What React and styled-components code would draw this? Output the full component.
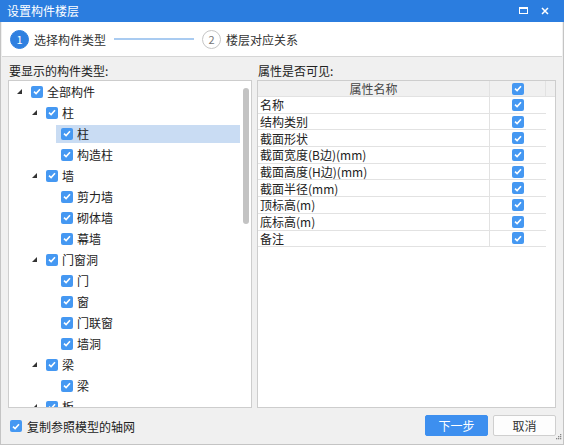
import React from 'react';
import styled, { createGlobalStyle } from 'styled-components';

const GlobalStyle = createGlobalStyle`
  html, body {
    margin: 0;
    padding: 0;
    background: #f0f0f0;
  }
  * {
    box-sizing: border-box;
  }
`;

const Window = styled.div`
  width: 564px;
  height: 445px;
  display: flex;
  flex-direction: column;
  background: #f0f0f0;
  border: 1px solid #c4c4c4;
  border-top: none;
  font-family: "Noto Sans CJK SC", "Noto Sans", sans-serif;
  font-size: 12px;
  color: #222;
  position: relative;
`;

const TitleBar = styled.div`
  height: 22px;
  margin: 0 -1px;
  background: #2b7ddf;
  color: #fff;
  display: flex;
  align-items: center;
  padding: 0 8px 1px 7px;
`;

const Title = styled.div`
  flex: 1;
  font-size: 12px;
`;

const TitleButton = styled.div`
  width: 22px;
  height: 20px;
  display: flex;
  align-items: center;
  justify-content: center;
`;

const StepBar = styled.div`
  height: 35px;
  margin: 0 1px;
  background: #fff;
  border-bottom: 1px solid #d6d6d6;
  display: flex;
  align-items: center;
  padding-left: 8px;
`;

const StepCircle = styled.div`
  width: 19px;
  height: 19px;
  border-radius: 50%;
  display: flex;
  align-items: center;
  justify-content: center;
  font-size: 11px;
  background: ${(p) => (p.active ? '#2f80e0' : '#fff')};
  border: 1px solid ${(p) => (p.active ? '#2f80e0' : '#c6c6c6')};
  color: ${(p) => (p.active ? '#fff' : '#777')};
`;

const StepText = styled.div`
  margin-left: 5px;
  color: #333;
`;

const StepLine = styled.div`
  width: 80px;
  height: 2px;
  background: #a9cbf1;
  margin: 0 8px 0 8px;
`;

const Content = styled.div`
  display: flex;
  gap: 5px;
  padding: 0 0 0 7px;
`;

const Column = styled.div`
  width: ${(p) => p.width}px;
  display: flex;
  flex-direction: column;
`;

const Label = styled.div`
  height: 23px;
  line-height: 28px;
  padding-left: 1px;
  color: #222;
`;

const Box = styled.div`
  height: 328px;
  background: #fff;
  border: 1px solid #cdcdcd;
  display: flex;
  overflow: hidden;
`;

const TreeList = styled.div`
  flex: 1;
`;

const Row = styled.div`
  height: 21px;
  display: flex;
  align-items: center;
  padding-left: ${(p) => 8 + p.level * 15}px;
`;

const Toggle = styled.div`
  width: 9px;
  height: 21px;
  display: flex;
  align-items: center;
`;

const Node = styled.div`
  flex: 1;
  height: 18px;
  display: flex;
  align-items: center;
  padding-left: 5px;
  background: ${(p) => (p.selected ? '#c9dcf3' : 'transparent')};
`;

const NodeText = styled.span`
  margin-left: 4px;
`;

const ScrollTrack = styled.div`
  width: 11px;
  padding-top: 7px;
  display: flex;
  justify-content: center;
`;

const ScrollThumb = styled.div`
  width: 6px;
  height: 136px;
  border-radius: 3px;
  background: #c3c3c3;
`;

const CheckBox = styled.span`
  width: 12px;
  height: 12px;
  border-radius: 2px;
  background: #4598f2;
  display: inline-flex;
  align-items: center;
  justify-content: center;
  flex-shrink: 0;
`;

const Table = styled.div`
  flex: 1;
  display: flex;
  flex-direction: column;
`;

const HeaderRow = styled.div`
  height: 16px;
  display: flex;
  background: #f0f0f0;
  border-bottom: 1px solid #e2e2e2;
`;

const DataRow = styled.div`
  height: 16.7px;
  width: 288px;
  display: flex;
  border-bottom: 1px solid #e2e2e2;
`;

const NameCell = styled.div`
  width: 232px;
  display: flex;
  align-items: center;
  justify-content: ${(p) => (p.center ? 'center' : 'flex-start')};
  padding-left: ${(p) => (p.center ? 0 : 2)}px;
  border-right: 1px solid #e2e2e2;
  color: ${(p) => (p.center ? '#444' : '#222')};
`;

const CheckCell = styled.div`
  width: 56px;
  display: flex;
  align-items: center;
  justify-content: center;
  border-right: ${(p) => (p.header ? '1px solid #e2e2e2' : 'none')};
`;

const Footer = styled.div`
  flex: 1;
  display: flex;
  align-items: center;
  padding: 0 7px 2px 9px;
`;

const FooterCheck = styled.label`
  flex: 1;
  display: flex;
  align-items: center;
  gap: 5px;
  margin-top: 2px;
`;

const Button = styled.button`
  width: 63px;
  height: 21px;
  margin-left: 5px;
  font-family: inherit;
  font-size: 12px;
  border-radius: 2px;
  border: 1px solid ${(p) => (p.primary ? '#3d8fef' : '#cfcfcf')};
  background: ${(p) => (p.primary ? '#3d8fef' : '#fdfdfd')};
  color: ${(p) => (p.primary ? '#fff' : '#333')};
  padding: 0;
`;

const Grip = styled.div`
  position: absolute;
  right: 1px;
  bottom: 1px;
`;

const Check = () => (
  <CheckBox>
    <svg width="8" height="7" viewBox="0 0 8 7">
      <path d="M1 3.6 L3.1 5.6 L7 1.3" fill="none" stroke="#fff" strokeWidth="1.6" />
    </svg>
  </CheckBox>
);

const Arrow = () => (
  <svg width="5" height="5" viewBox="0 0 5 5">
    <polygon points="5,0 5,5 0,5" fill="#333" />
  </svg>
);

const tree = [
  { level: 0, text: '全部构件', open: true },
  { level: 1, text: '柱', open: true },
  { level: 2, text: '柱', selected: true },
  { level: 2, text: '构造柱' },
  { level: 1, text: '墙', open: true },
  { level: 2, text: '剪力墙' },
  { level: 2, text: '砌体墙' },
  { level: 2, text: '幕墙' },
  { level: 1, text: '门窗洞', open: true },
  { level: 2, text: '门' },
  { level: 2, text: '窗' },
  { level: 2, text: '门联窗' },
  { level: 2, text: '墙洞' },
  { level: 1, text: '梁', open: true },
  { level: 2, text: '梁' },
  { level: 1, text: '板', open: true },
];

const props = [
  '名称',
  '结构类别',
  '截面形状',
  '截面宽度(B边)(mm)',
  '截面高度(H边)(mm)',
  '截面半径(mm)',
  '顶标高(m)',
  '底标高(m)',
  '备注',
];

export default function App() {
  return (
    <>
      <GlobalStyle />
      <Window>
        <TitleBar>
          <Title>设置构件楼层</Title>
          <TitleButton>
            <svg width="9" height="7" viewBox="0 0 9 7">
              <rect x="0.5" y="0.5" width="8" height="6" fill="none" stroke="#fff" />
              <rect x="0.5" y="0.5" width="8" height="1.5" fill="#fff" />
            </svg>
          </TitleButton>
          <TitleButton>
            <svg width="8" height="8" viewBox="0 0 8 8">
              <path d="M1 1 L7 7 M7 1 L1 7" stroke="#fff" strokeWidth="1.5" />
            </svg>
          </TitleButton>
        </TitleBar>
        <StepBar>
          <StepCircle active>1</StepCircle>
          <StepText>选择构件类型</StepText>
          <StepLine />
          <StepCircle>2</StepCircle>
          <StepText>楼层对应关系</StepText>
        </StepBar>
        <Content>
          <Column width={244}>
            <Label>要显示的构件类型:</Label>
            <Box>
              <TreeList>
                {tree.map((n, i) => (
                  <Row key={i} level={n.level}>
                    <Toggle>{n.open && <Arrow />}</Toggle>
                    <Node selected={n.selected}>
                      <Check />
                      <NodeText>{n.text}</NodeText>
                    </Node>
                  </Row>
                ))}
              </TreeList>
              <ScrollTrack>
                <ScrollThumb />
              </ScrollTrack>
            </Box>
          </Column>
          <Column width={299}>
            <Label>属性是否可见:</Label>
            <Box>
              <Table>
                <HeaderRow>
                  <NameCell center>属性名称</NameCell>
                  <CheckCell header>
                    <Check />
                  </CheckCell>
                </HeaderRow>
                {props.map((p) => (
                  <DataRow key={p}>
                    <NameCell>{p}</NameCell>
                    <CheckCell>
                      <Check />
                    </CheckCell>
                  </DataRow>
                ))}
              </Table>
            </Box>
          </Column>
        </Content>
        <Footer>
          <FooterCheck>
            <Check />
            <span>复制参照模型的轴网</span>
          </FooterCheck>
          <Button primary>下一步</Button>
          <Button>取消</Button>
        </Footer>
        <Grip>
          <svg width="6" height="6" viewBox="0 0 6 6">
            <rect x="4" y="0" width="1.3" height="1.3" fill="#888" />
            <rect x="2" y="2" width="1.3" height="1.3" fill="#888" />
            <rect x="4" y="2" width="1.3" height="1.3" fill="#888" />
            <rect x="0" y="4" width="1.3" height="1.3" fill="#888" />
            <rect x="2" y="4" width="1.3" height="1.3" fill="#888" />
            <rect x="4" y="4" width="1.3" height="1.3" fill="#888" />
          </svg>
        </Grip>
      </Window>
    </>
  );
}
